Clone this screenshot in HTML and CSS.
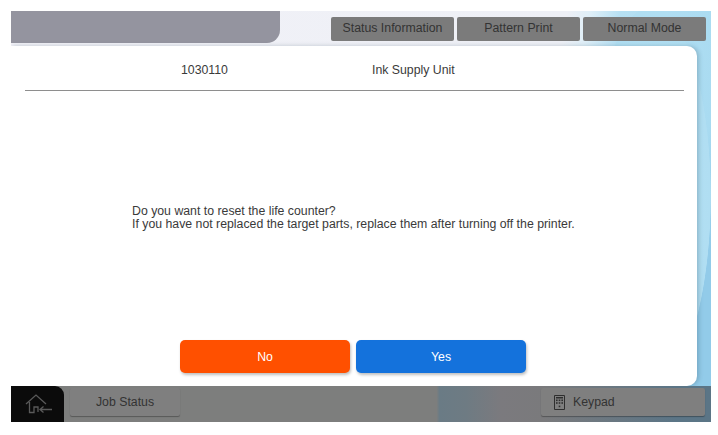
FILE: index.html
```html
<!DOCTYPE html>
<html lang="en">
<head>
    <meta charset="UTF-8">
    <title>Life Counter Reset</title>
    <link rel="stylesheet" href="styles.css">
</head>
<body>
    <div class="screen">
        <header class="topbar">
            <div class="title-panel"></div>
            <nav class="tabs">
                <div class="tab">Status Information</div>
                <div class="tab">Pattern Print</div>
                <div class="tab">Normal Mode</div>
            </nav>
        </header>
        <main class="card">
            <div class="part-row">
                <span class="part-code">1030110</span>
                <span class="part-name">Ink Supply Unit</span>
            </div>
            <div class="message">
                <p>Do you want to reset the life counter?</p>
                <p>If you have not replaced the target parts, replace them after turning off the printer.</p>
            </div>
            <div class="actions">
                <button class="btn btn-no">No</button>
                <button class="btn btn-yes">Yes</button>
            </div>
        </main>
        <footer class="bottombar">
            <div class="home">
                <svg width="28" height="20" viewBox="0 0 28 20" fill="none" stroke="#5a5a5a" stroke-width="1.3">
                    <path d="M1 10 L11 1 L21 10"/>
                    <path d="M4.5 8 V18.5 H9 V13 H13 V18"/>
                    <path d="M15 15.5 H27 M18.5 12.5 L15 15.5 L18.5 18.5"/>
                </svg>
            </div>
            <div class="bar-btn job-status">Job Status</div>
            <div class="bar-btn keypad">
                <svg width="11" height="15" viewBox="0 0 11 15" fill="#2e2e2e">
                    <path d="M0.5 0.5 H10.5 V14.5 H0.5 Z" fill="none" stroke="#2e2e2e"/>
                    <rect x="2" y="2" width="7" height="1.5"/>
                    <rect x="2" y="4.5" width="1.6" height="1.6"/>
                    <rect x="4.7" y="4.5" width="1.6" height="1.6"/>
                    <rect x="7.4" y="4.5" width="1.6" height="1.6"/>
                    <rect x="2" y="7.2" width="1.6" height="1.6"/>
                    <rect x="4.7" y="7.2" width="1.6" height="1.6"/>
                    <rect x="7.4" y="7.2" width="1.6" height="1.6"/>
                    <rect x="4.7" y="10.6" width="1.6" height="1.6"/>
                </svg>
                <span>Keypad</span>
            </div>
        </footer>
    </div>
</body>
</html>
```
FILE: styles.css
```css
html, body {
    margin: 0;
    height: 100%;
    background: #fff;
}
body {
    font-family: "Liberation Sans", Arial, sans-serif;
    color: #3a3a3a;
    font-size: 12.3px;
}
.screen {
    width: 700px;
    height: 411px;
    margin: 11px 0 0 11px;
    overflow: hidden;
    display: flex;
    flex-direction: column;
    background:
        radial-gradient(ellipse 60px 190px at 640px 185px, #b6e1f3 0%, #b0def2 99%, transparent 100%),
        linear-gradient(100deg, #f1f1f7 0%, #eef0f6 72%, #dfeff8 75%, #b6e0f3 79%, #a9dbf1 93%, #92cbe9 96%, #92cbe9 100%);
}
.topbar {
    height: 35px;
    display: flex;
    justify-content: space-between;
    flex: none;
}
.title-panel {
    width: 269px;
    height: 32px;
    background: #94949f;
    border-bottom-right-radius: 13px;
}
.tabs {
    display: flex;
    gap: 3px;
    padding: 6px 5px 0 0;
}
.tab {
    width: 123px;
    height: 24px;
    line-height: 23px;
    text-align: center;
    background: #7b7b7b;
    border-radius: 2px;
    color: #333;
}
.card {
    width: 686px;
    height: 340px;
    flex: none;
    box-sizing: border-box;
    padding: 0 13px 0 14px;
    background: #fff;
    border-radius: 0 10px 10px 0;
    box-shadow: 2px 0 4px rgba(40, 70, 90, 0.25);
    display: flex;
    flex-direction: column;
}
.part-row {
    height: 45px;
    flex: none;
    padding-top: 3px;
    border-bottom: 1px solid #8e8e8e;
    display: flex;
    align-items: center;
    box-sizing: border-box;
}
.part-code {
    width: 347px;
    padding-left: 156px;
    box-sizing: border-box;
}
.message {
    margin: 114px 0 0 107px;
    line-height: 13px;
}
.message p {
    margin: 0;
}
.actions {
    margin: 109px 0 0 155px;
    display: flex;
    gap: 6px;
}
.btn {
    width: 170px;
    height: 33px;
    padding: 0;
    border: none;
    border-radius: 5px;
    color: #fff;
    font-family: inherit;
    font-size: 12.3px;
    box-shadow: 1px 2px 3px rgba(0, 0, 0, 0.25);
}
.btn-no {
    background: #ff5000;
}
.btn-yes {
    background: #1472dc;
}
.bottombar {
    height: 36px;
    flex: none;
    display: flex;
    align-items: flex-start;
    background: linear-gradient(90deg, #7d7e7d 0%, #7d7e7d 60.8%, #6a7b85 61.2%, #6e7b83 65%, #7b7a7e 70%, #7a7a7c 76%, #5b7586 95%, #5b7586 100%);
}
.home {
    width: 53px;
    height: 36px;
    padding-left: 2px;
    box-sizing: border-box;
    background: #0b0b0b;
    border-top-right-radius: 9px;
    display: flex;
    align-items: center;
    justify-content: center;
}
.bar-btn {
    height: 28px;
    margin-top: 2px;
    line-height: 28px;
    background: #7f7f7f;
    border-radius: 2px;
    box-shadow: 0 1px 1px rgba(0, 0, 0, 0.3);
    color: #333;
}
.job-status {
    width: 110px;
    margin-left: 6px;
    text-align: center;
}
.keypad {
    width: 164px;
    margin-left: auto;
    margin-right: 6px;
    padding-left: 13px;
    box-sizing: border-box;
    display: flex;
    align-items: center;
    gap: 8px;
}
```
